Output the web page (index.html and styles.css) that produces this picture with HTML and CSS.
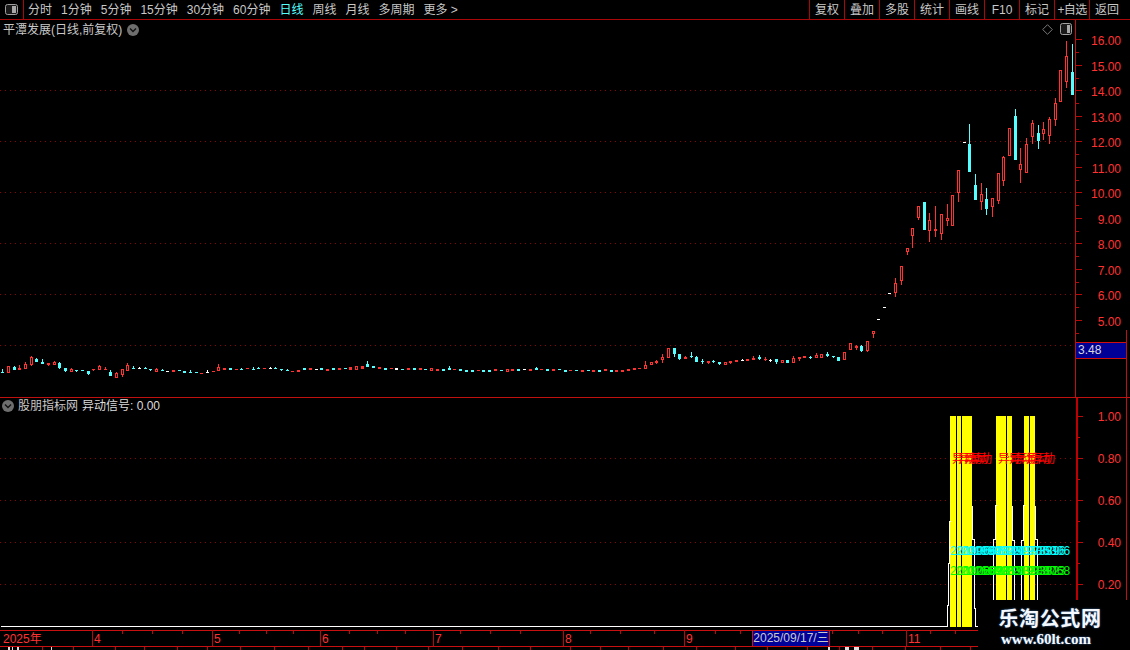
FILE: index.html
```html
<!DOCTYPE html>
<html lang="zh">
<head>
<meta charset="utf-8">
<title>平潭发展</title>
<link rel="stylesheet" href="styles.css">
</head>
<body>
<div class="app">
  <header class="toolbar">
    <div class="toggle-cell">
      <svg class="toggle-icon" width="13" height="11" viewBox="0 0 13 11"><rect x="0.5" y="0.5" width="12" height="10" rx="2" class="ti-frame"/><rect x="7" y="2" width="4" height="7" class="ti-fill"/></svg>
    </div>
    <nav class="periods">
      <span>分时</span><span>1分钟</span><span>5分钟</span><span>15分钟</span><span>30分钟</span><span>60分钟</span><span class="active">日线</span><span>周线</span><span>月线</span><span>多周期</span><span>更多 &gt;</span>
    </nav>
    <nav class="tools">
      <span>复权</span><span>叠加</span><span>多股</span><span>统计</span><span>画线</span><span>F10</span><span>标记</span><span class="tight">+自选</span><span>返回</span>
    </nav>
  </header>

  <section class="pane price-pane">
    <svg id="price" class="plot" width="1130" height="377"></svg>
    <div class="pane-title title-top">
      <span>平潭发展(日线,前复权)</span>
      <svg class="chev" width="12" height="12" viewBox="0 0 12 12"><circle cx="6" cy="6" r="6"/><path d="M3 4.5 6 7.5 9 4.5"/></svg>
    </div>
    <div class="pane-icons">
      <svg width="11" height="11" viewBox="0 0 11 11"><path class="diamond" d="M5.5 .7 10.3 5.5 5.5 10.3 .7 5.5Z"/></svg>
      <svg width="12" height="12" viewBox="0 0 12 12"><rect x=".5" y=".5" width="11" height="11" rx="2" class="ti-frame"/><rect x="7" y="2" width="3" height="8" class="ti-fill"/></svg>
    </div>
    <div class="price-tag">3.48</div>
  </section>

  <section class="pane signal-pane">
    <svg id="signal" class="plot" width="1130" height="232"></svg>
    <div class="pane-title title-sub">
      <svg class="chev" width="12" height="12" viewBox="0 0 12 12"><circle cx="6" cy="6" r="6"/><path d="M3 4.5 6 7.5 9 4.5"/></svg>
      <span class="src">股朋指标网</span>
      <span class="sig">异动信号: 0.00</span>
    </div>
  </section>

  <section class="time-axis">
    <svg id="time" class="plot" width="1130" height="20"></svg>
    <div class="date-tag">2025/09/17/三</div>
  </section>

  <div class="watermark">
    <div class="wm-cn">乐淘公式网</div>
    <div class="wm-en">www.60lt.com</div>
  </div>
</div>
<script src="chart.js"></script>
</body>
</html>
```
FILE: styles.css
```css
* { box-sizing: border-box; }
html, body { margin: 0; padding: 0; background: #000; }
body { font-family: "Liberation Sans", "Noto Sans CJK SC", sans-serif; font-size: 12px; color: #c8c8c8; overflow: hidden; }
.app { position: relative; width: 1130px; height: 650px; display: flex; flex-direction: column; overflow: hidden; background: #000; }

.toolbar { height: 20px; flex: none; display: flex; align-items: center; border-bottom: 1px solid #a80808; }
.toggle-cell { width: 24px; height: 19px; border-right: 1px solid #a80808; display: flex; align-items: center; justify-content: center; }
.ti-frame { fill: #1a1a1a; stroke: #a0a0a0; }
.ti-fill { fill: #a8a8a8; }
.periods { display: flex; gap: 9px; padding-left: 4px; flex: 1; height: 19px; line-height: 20px; white-space: nowrap; }
.periods .active { color: #54ffff; }
.tools { display: flex; height: 19px; line-height: 20px; }
.tools span { width: 35px; text-align: center; border-left: 1px solid #a80808; white-space: nowrap; }
.tools span:last-child { width: 41px; padding-right: 6px; }
.tools .tight { letter-spacing: -.6px; }

.pane { position: relative; flex: none; }
.price-pane { height: 378px; border-bottom: 1px solid #c01010; }
.signal-pane { height: 232px; }
.plot { display: block; }
.pane-title { position: absolute; display: flex; align-items: center; line-height: 16px; white-space: nowrap; }
.title-top { left: 3px; top: 2px; gap: 5px; }
.title-sub { left: 2px; top: 0; }
.title-sub .src { margin-left: 4px; }
.title-sub .sig { margin-left: 4px; color: #dcdcdc; }
.chev circle { fill: #6e6e6e; }
.chev path { fill: none; stroke: #111; stroke-width: 1.4; }
.diamond { fill: none; stroke: #7a7a7a; }
.pane-icons { position: absolute; right: 58px; top: 3px; display: flex; gap: 7px; align-items: center; }

.price-tag { position: absolute; left: 1076px; top: 322px; width: 50px; height: 17px; line-height: 15px; padding-left: 2px; background: #000096; border-top: 1px solid #d01010; border-bottom: 1px solid #d01010; color: #d8d8d8; }

.time-axis { position: relative; flex: none; height: 20px; }
.date-tag { position: absolute; left: 752px; top: 1px; width: 78px; height: 15px; line-height: 15px; background: #00009a; color: #c8c8c8; text-align: center; border-left: 1px solid #d01010; border-right: 1px solid #d01010; white-space: nowrap; }

.watermark { position: absolute; left: 978px; top: 600px; width: 152px; height: 50px; background: #000; text-align: center; font-family: "Liberation Serif", "Noto Sans CJK SC", serif; font-weight: 700; color: #f4f8ff; padding-right: 16px; }
.wm-cn { margin-top: 8px; padding-left: 8px; font-size: 20px; line-height: 22px; letter-spacing: 0.6px; text-shadow: 0 0 2px #3a6ea8; }
.wm-en { font-size: 15px; line-height: 19px; text-shadow: 0 0 2px #3a6ea8; }

.lab { font-family: "Liberation Sans", "Noto Sans CJK SC", sans-serif; font-size: 12px; fill: #ff3232; }
.lab-t { font-family: "Liberation Sans", "Noto Sans CJK SC", sans-serif; font-size: 12px; fill: #ff3232; }
.mark-r { font-family: "Noto Sans CJK SC", sans-serif; font-size: 12px; fill: #ff0000; }
.mark-c { font-family: "Liberation Sans", sans-serif; font-size: 12px; fill: #00ffff; }
.mark-g { font-family: "Liberation Sans", sans-serif; font-size: 12px; fill: #00ff00; }

.grid { stroke: #900000; stroke-width: 1; stroke-dasharray: 1 4; shape-rendering: crispEdges; }
.axis-line { stroke: #c01010; stroke-width: 1; shape-rendering: crispEdges; }
.axis-strong { stroke: #c00000; stroke-width: 2; shape-rendering: crispEdges; }
.rule { stroke: #c81010; stroke-width: 1; shape-rendering: crispEdges; }
.tick { stroke: #b80808; stroke-width: 1; shape-rendering: crispEdges; }
.r { fill: #ff3232; }
.c { fill: #54ffff; }
.w { fill: #fff; }
.hollow { fill: #000; stroke: #ff3232; stroke-width: 1; shape-rendering: crispEdges; }
.solid { shape-rendering: crispEdges; }
.yellow { fill: #ffff00; shape-rendering: crispEdges; }
.bar-gap { fill: #000; shape-rendering: crispEdges; }
.white-step { fill: none; stroke: #fff; stroke-width: 1; shape-rendering: crispEdges; }
.frag { fill: #e0e0e0; shape-rendering: crispEdges; }
```
FILE: chart.js
```js
var NS = 'http://www.w3.org/2000/svg';
function el(svg, name, attrs, text) {
  var n = document.createElementNS(NS, name);
  for (var k in attrs) n.setAttribute(k, attrs[k]);
  if (text !== undefined) n.textContent = text;
  svg.appendChild(n);
  return n;
}
var price = document.getElementById('price');
var signal = document.getElementById('signal');
var time = document.getElementById('time');
var PY = 20, SY = 398;

function hline(svg, cls, x1, x2, y) {
  el(svg, 'line', { 'class': cls, x1: x1, y1: y + .5, x2: x2, y2: y + .5 });
}
function vline(svg, cls, x, y1, y2) {
  el(svg, 'line', { 'class': cls, x1: x + .5, y1: y1, x2: x + .5, y2: y2 });
}

/* candle: [x, type, bodyTop, bodyBottom, wickTop, wickBottom] in page pixels */
function candle(c) {
  var L = Math.floor(c[0] - 1), T = Math.round(c[2]), B = Math.round(c[3]);
  var type = c[1];
  var wt = c[4] === undefined ? T : Math.round(c[4]);
  var wb = c[5] === undefined ? B : Math.round(c[5]);
  var cls = (type === 'c') ? 'c' : (type === 'w') ? 'w' : 'r';
  if (wb > wt) el(price, 'rect', { 'class': cls + ' solid', x: L + 1, y: wt - PY, width: 1, height: wb - wt });
  if (type === 'h') {
    el(price, 'rect', { 'class': 'hollow', x: L + .5, y: T - PY + .5, width: 2, height: Math.max(B - T - 1, 1) });
  } else {
    el(price, 'rect', { 'class': cls + ' solid', x: L, y: T - PY, width: 3, height: Math.max(B - T, 1) });
  }
}
function sec(base, rows) {
  rows.forEach(function (r) {
    candle([r[0], r[1], base + r[2] / 3, base + r[3] / 3,
      r[4] === undefined ? undefined : base + r[4] / 3,
      r[5] === undefined ? undefined : base + r[5] / 3]);
  });
}

/* price axis and grid */
[90, 141, 192, 243, 294, 345].forEach(function (y) { hline(price, 'grid', 0, 1075, y - PY); });
vline(price, 'axis-line', 1075, 0, 377);
vline(price, 'axis-line', 1126, 310, 377);
var labels = [['16.00', 40], ['15.00', 66], ['14.00', 91], ['13.00', 117], ['12.00', 142], ['11.00', 168], ['10.00', 193], ['9.00', 219], ['8.00', 244], ['7.00', 270], ['6.00', 295], ['5.00', 321], ['4.00', 346]];
labels.forEach(function (l) {
  var y = l[1] - PY;
  hline(price, 'tick', 1076, 1082, y - 1);
  hline(price, 'tick', 1076, 1079, y + 12);
  el(price, 'text', { 'class': 'lab', x: 1121, y: y + 4.5, 'text-anchor': 'end' }, l[0]);
});

/* left part */
sec(340, [
 [2,'c',96,99,87],[8,'h',79,99],[14,'c',81,90,78],[19,'r',84,90,75],[25,'h',72,87,66],[31,'h',51,75,48,78],
 [36,'c',57,66,54],[42,'c',66,72,57],[48,'r',69,75,69,78],[54,'h',66,75,63],[59,'c',69,84,66,87],[65,'c',84,93,84,96],
 [71,'h',87,95,84],[76,'c',90,93,90,96],[82,'c',91,93],[88,'c',93,102,93,105],[93,'r',87,90,87,93],[99,'h',78,90,75],
 [105,'r',87,90,81],[110,'c',96,108,90],[116,'h',99,114,96],[122,'h',87,105,87,111],[127,'h',75,93,69],[133,'c',84,87,78],
 [139,'w',84,87,81],[145,'c',84,87,81],[150,'c',87,90,87,93],[156,'h',87,95,84],[162,'c',90,93,87],[167,'w',93,96],
 [173,'r',90,96],[179,'c',90,93],[184,'c',93,99],[190,'c',96,99,90],[196,'c',96,99],[201,'r',99,102],[207,'w',96,99,90],
 [213,'r',93,96],[218,'h',81,93,72],[224,'r',84,90],[230,'c',84,90],[236,'r',87,90],[241,'c',87,90,84],[247,'r',84,87],
 [253,'c',87,90,81],[258,'c',84,87,81],[264,'r',84,87],[270,'w',84,87,81],[275,'c',84,87,81],[281,'c',87,90,87,93],
 [287,'c',90,93,87],[292,'r',93,96],[298,'r',90,96]
]);
/* quiet middle */
[
 [304,'c',368,370],[310,'r',368,370],[316,'w',369,370],[321,'c',368,370],[327,'r',369,371],[333,'c',368,370],
 [339,'r',368,370],[345,'c',368,369],[350,'r',367,370],[356,'h',366,370],[362,'r',366,369],[367,'c',364,367,361],
 [373,'c',366,368],[379,'r',367,369],[385,'c',368,370],[391,'r',368,369],[396,'w',368,370],[402,'c',369,370],
 [408,'r',368,370],[414,'c',368,370],[420,'r',368,370],[425,'c',369,370],[431,'h',368,371],[437,'r',369,371],
 [443,'c',369,371],[449,'c',368,370,366],[454,'r',369,370],[460,'c',369,371],[466,'c',370,372],[472,'c',370,372],
 [478,'r',370,371],[483,'c',370,372],[489,'c',370,372],[495,'r',369,371],[501,'c',370,371],[507,'h',369,372],
 [512,'r',369,371],[518,'c',369,371],[524,'w',369,370],[530,'r',369,371],[536,'c',368,370,367],[541,'r',369,370],
 [547,'c',369,371],[553,'r',369,371],[559,'c',369,370],[565,'c',370,372],[570,'r',370,371],[576,'c',370,371],
 [582,'r',370,372],[588,'c',370,371],[593,'r',370,372],[599,'c',370,372],[605,'r',369,371],[611,'c',370,372],[616,'r',370,372]
].forEach(candle);
/* rising hump */
sec(330, [
 [622,'r',121,126],[628,'r',118,123],[634,'r',115,120],[639,'r',114,117],[645,'h',106,117,93],[651,'h',96,105],
 [656,'r',94,100,90,102],[662,'h',82,90,72,100],[668,'h',54,84],[674,'c',54,72,54,81],[679,'c',72,87,72,90],[685,'r',82,87,78],
 [691,'c',78,82,66,84],[696,'c',81,96,78],[702,'c',93,96,87,102],[708,'r',94,99,94,102],[713,'c',93,96,90,100],
 [719,'c',97,102,97,105],[725,'h',97,104],[730,'r',94,99,94,102],[736,'r',90,96],[742,'w',90,93,87],[747,'r',88,93],
 [753,'r',84,90,78],[759,'c',81,87,75,90],[765,'r',87,90,81,93],[770,'w',90,93,87,96],[776,'c',87,96,87,102],
 [782,'h',91,99],[787,'c',90,99],[793,'h',85,98,78],[799,'r',82,87,82,93],[804,'r',79,84],[810,'c',81,84,78,87],
 [816,'h',76,84,69],[821,'h',73,84],[827,'c',72,78,66,81],[833,'c',78,81,78,84],[838,'c',81,93],[844,'h',67,90],
 [850,'h',40,60],[856,'r',48,54,45,60],[861,'c',48,63,45,66],[867,'h',34,63,34,66],[873,'h',3,12,3,24]
]);
/* breakout: direct page pixels */
[
 [878,'w',319,320],[884,'w',307,308],[889,'w',293,294],[895,'h',283,293,278,297],[901,'h',266,281,266,285],
 [907,'h',248,252,248,255],[912,'h',228,236,228,248],[918,'h',206,218,206,220],[924,'c',202,230],[929,'h',220,231,213,242],
 [935,'h',229,231,206,237],[941,'h',214,234,214,240],[947,'h',218,221,204,226],[952,'h',195,226],[958,'h',170,193,170,202],
 [964,'w',142,143],[969,'c',144,172,124],[975,'c',185,200,174],[981,'h',194,202,183,210],[986,'c',199,209,188,215],
 [992,'h',198,207,198,217],[998,'h',173,201,173,204],[1003,'h',157,181,156,186],[1009,'h',128,156],[1015,'c',116,160,109],
 [1020,'h',164,170,148,183],[1026,'h',144,173,138],[1032,'h',123,137,120,144],[1038,'c',133,141,125,149],[1043,'h',129,134,122,140],
 [1049,'h',119,136,117,144],[1055,'h',103,120,98,126],[1060,'h',70,102],[1066,'h',56,82,41,88],[1072,'c',72,95,44]
].forEach(candle);

/* signal pane */
var S = function (y) { return y - SY; };
[458, 500, 542, 584].forEach(function (y) { hline(signal, 'grid', 0, 1075, S(y)); });
[[950, 972, [956, 961]], [996, 1012, [1006]], [1024, 1035, [1029]]].forEach(function (b) {
  el(signal, 'rect', { 'class': 'yellow', x: b[0], y: S(416), width: b[1] - b[0], height: 211 });
  b[2].forEach(function (x) { el(signal, 'rect', { 'class': 'bar-gap', x: x, y: S(416), width: 1, height: 211 }); });
});
function step(points) {
  el(signal, 'polyline', { 'class': 'white-step', points: points.map(function (p) { return (p[0] + .5) + ',' + (S(p[1]) + .5); }).join(' ') });
}
step([[0, 626], [947, 626], [947, 605], [948, 605], [948, 563], [949, 563], [949, 521], [950, 521]]);
step([[972, 505], [972, 539], [974, 539], [974, 608], [975, 608], [975, 626], [978, 626]]);
step([[993, 600], [993, 539], [995, 539], [995, 505], [996, 505]]);
step([[1012, 505], [1012, 540], [1014, 540], [1014, 600]]);
step([[1021, 600], [1021, 540], [1023, 540], [1023, 505], [1024, 505]]);
step([[1035, 505], [1035, 539], [1037, 539], [1037, 600]]);

[952, 958, 964, 968, 998, 1009, 1015, 1026, 1031].forEach(function (x) {
  el(signal, 'text', { 'class': 'mark-r', x: x, y: S(463) }, '异动');
});
[[950, '20190506'], [956, '20190613'], [961, '20198927'], [968, '20190528'], [996, '20199730'], [1006, '20197839'], [1012, '20193916'], [1020, '197.5306']].forEach(function (p) {
  el(signal, 'text', { 'class': 'mark-c', x: p[0], y: S(555) }, p[1]);
});
[[950, '20190268'], [956, '20126898'], [961, '20166028'], [968, '20169933'], [996, '20193283'], [1006, '20192382'], [1012, '20193913'], [1020, '193.8768']].forEach(function (p) {
  el(signal, 'text', { 'class': 'mark-g', x: p[0], y: S(575) }, p[1]);
});
vline(signal, 'axis-strong', 1076, 0, 202);
vline(signal, 'axis-line', 1126, 0, 202);
[['1.00', 416], ['0.80', 458], ['0.60', 500], ['0.40', 542], ['0.20', 584]].forEach(function (l) {
  var y = S(l[1]);
  hline(signal, 'tick', 1077, 1083, y);
  hline(signal, 'tick', 1077, 1080, y + 21);
  el(signal, 'text', { 'class': 'lab', x: 1121, y: y + 5, 'text-anchor': 'end' }, l[0]);
});

/* time axis */
hline(time, 'rule', 0, 978, 0);
hline(time, 'rule', 0, 978, 16);
el(time, 'text', { 'class': 'lab-t', x: 3, y: 13 }, '2025年');
[[92, '4'], [212, '5'], [320, '6'], [433, '7'], [563, '8'], [684, '9'], [906, '11']].forEach(function (m) {
  vline(time, 'tick', m[0], 0, 16);
  el(time, 'text', { 'class': 'lab-t', x: m[0] + 2, y: 13 }, m[1]);
});
[122, 152, 182, 239, 266, 293, 349, 377, 405, 460, 490, 520, 590, 620, 654, 715, 740, 832, 858, 882, 930, 955].forEach(function (x) {
  vline(time, 'tick', x, 1, 4);
});
[42, 73, 115, 144, 177, 207, 240, 274, 308, 342, 364, 396, 428, 462, 498, 530, 570, 600, 628, 663, 696, 735, 767, 807, 839, 872, 905, 940, 970].forEach(function (x) {
  vline(time, 'tick', x, 17, 20);
});
[[8, 2], [12, 1], [17, 2], [51, 1], [828, 2], [845, 4], [854, 5]].forEach(function (f) {
  el(time, 'rect', { 'class': 'frag', x: f[0], y: 17, width: f[1], height: 3 });
});
```
